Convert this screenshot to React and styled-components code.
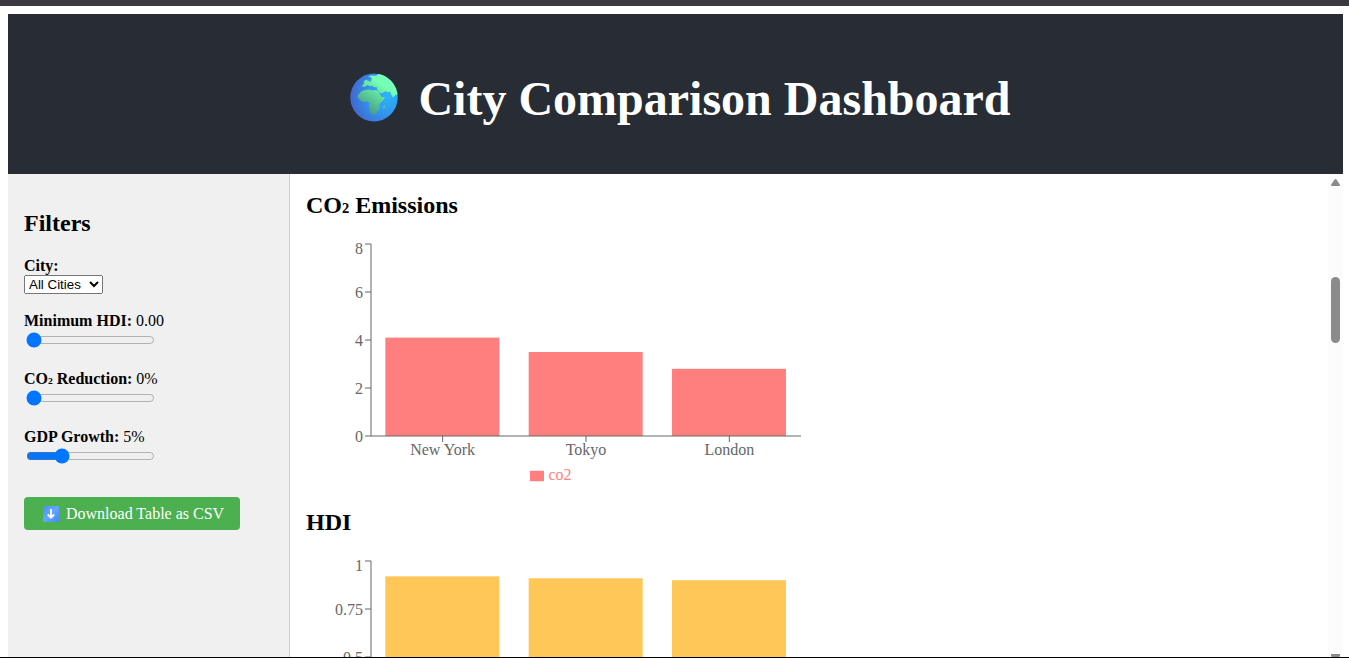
import React, { useState } from "react";
import styled, { createGlobalStyle } from "styled-components";

const GlobalStyle = createGlobalStyle`
  html { overflow: hidden; }
  body {
    margin: 0;
    background: #fff;
    color: #000;
    font: 16px/18px "Liberation Serif", "Times New Roman", serif;
    overflow: hidden;
  }
`;

const Page = styled.div`
  box-sizing: border-box;
  height: 658px;
  padding: 8px 6px 0 8px;
  border-top: 6px solid #3b393f;
  border-bottom: 1px solid #000;
  display: flex;
  flex-direction: column;
  overflow: hidden;
`;

const Header = styled.header`
  flex: none;
  box-sizing: border-box;
  height: 160px;
  padding-top: 6px;
  background: #282c34;
  color: #fff;
  display: flex;
  align-items: center;
  justify-content: center;
`;

const Title = styled.h1`
  margin: 0;
  padding-left: 10px;
  display: flex;
  align-items: center;
  font-size: 48px;
  line-height: 56px;
  white-space: nowrap;
`;

const TitleText = styled.span`
  margin: 4px 0 0 20px;
`;

const Body = styled.div`
  flex: 1;
  min-height: 0;
  display: flex;
`;

const Sidebar = styled.aside`
  flex: none;
  box-sizing: border-box;
  width: 282px;
  padding: 36px 16px 0;
  background: #f0f0f0;
  border-right: 1px solid #ccc;
`;

const Heading = styled.h2`
  margin: 0 0 20px;
  font-size: 24px;
  line-height: 27px;
  white-space: nowrap;
`;

const Subscript = styled.span`
  line-height: 0;
  vertical-align: 0.19em;
`;

const Field = styled.div`
  height: ${(p) => p.$height || 58}px;
`;

const Label = styled.label`
  display: block;
  height: 18px;
  white-space: nowrap;
`;

const Select = styled.select`
  display: block;
  width: 79px;
  height: 19px;
  font: 13.3333px "Liberation Sans", Arial, sans-serif;
`;

const Slider = styled.input`
  display: block;
  width: 129px;
  height: 16px;
  margin: 2px;
`;

const DownloadButton = styled.button`
  display: flex;
  align-items: center;
  width: 216px;
  height: 33px;
  margin-top: 11px;
  padding: 0 0 0 19px;
  gap: 7px;
  border: 0;
  border-radius: 4px;
  background: #4caf50;
  color: #fff;
  font: 16px/18px "Liberation Serif", "Times New Roman", serif;
  white-space: nowrap;
`;

const Content = styled.main`
  flex: 1;
  min-width: 0;
  padding: 18px 0 0 16px;
  overflow: hidden;
`;

const Chart = styled.svg`
  display: block;
  margin-bottom: 20px;
  font-size: 16px;
`;

const Scrollbar = styled.div`
  flex: none;
  width: 15px;
  background: #fcfcfc;
  display: flex;
  flex-direction: column;
  align-items: center;
  overflow: hidden;
`;

const ScrollArrow = styled.svg`
  flex: none;
  display: block;
  width: 9px;
  height: 7px;
  margin-top: 5px;
`;

const ScrollThumb = styled.div`
  flex: none;
  width: 9px;
  height: 66px;
  margin: 91px 0 306px;
  border-radius: 5px;
  background: #8b8b8b;
`;

function Globe() {
  return (
    <svg width="48" height="49" viewBox="0 0 48 49" aria-hidden="true">
      <defs>
        <radialGradient id="ocean" cx="0.8" cy="0.45" r="0.8">
          <stop offset="0" stopColor="#29b6fb" />
          <stop offset="0.5" stopColor="#3295ee" />
          <stop offset="1" stopColor="#4168cf" />
        </radialGradient>
        <linearGradient id="land" gradientUnits="userSpaceOnUse" x1="33" y1="12" x2="16" y2="38">
          <stop offset="0" stopColor="#77ffb5" />
          <stop offset="0.4" stopColor="#62d99c" />
          <stop offset="1" stopColor="#469b8b" />
        </linearGradient>
        <clipPath id="disc"><ellipse cx="24" cy="24.5" rx="23.7" ry="24" /></clipPath>
      </defs>
      <ellipse cx="24" cy="24.5" rx="23.7" ry="24" fill="url(#ocean)" />
      <g clipPath="url(#disc)" fill="url(#land)">
        <path d="M18 4l3-1.5 5 .3L30 0l9 3 10 10v8l-3.500 1L43 24.500l-1.500-2-1.500-4-2.500 1-2-1.500-2 1.500-3 1L28 18l-1-2 .5-1.500-4-.5-1.500-1.500-1.500 1-3-1.500-2 1.500-3 .5v-2l2-2-1-1.500 3-2 1.500 1.500 3-1 1-2-2-1z" />
        <path d="M11 18.500l4-1.500 5-.5 1.500 1 4-.5 2.500 1 2 3.500 1.500 2.500h3.500l-2 3.500-3.500 3.500v5l-2 2-1.500 2.500-3 1.500-2.500-1.500-1-3.500-.5-4 .5-3-2-1.500-4 .5-3-1.500-2.500-3v-2.500l2-2z" />
        <path d="M33.500 33l1-1 .6 2-1.200 2-1-1z" />
      </g>
      <path d="M19 4.500l2 .5.5 2-1 2-1.500-.5.5-2z" fill="#319de9" />
    </svg>
  );
}

function DownArrow() {
  return (
    <svg width="16" height="16" viewBox="0 0 16 16" aria-hidden="true">
      <defs>
        <linearGradient id="tile" x1="0" y1="0" x2="1" y2="1">
          <stop offset="0" stopColor="#4a91ee" />
          <stop offset="0.5" stopColor="#62a6ff" />
          <stop offset="1" stopColor="#4388f0" />
        </linearGradient>
      </defs>
      <rect width="16" height="16" rx="1" fill="url(#tile)" />
      <path d="M8 3v8M4.8 8.500L8 11.700l3.200-3.200" fill="none" stroke="#fff" strokeWidth="1.8" />
    </svg>
  );
}

const CITIES = ["New York", "Tokyo", "London"];

function BarChart({ values, max, ticks, color, name }) {
  const band = 430 / 3;
  const toY = (v) => 5 + 192 * (1 - v / max);
  return (
    <Chart width="500" height="250" viewBox="0 0 500 250">
      {values.map((v, i) => (
        <rect key={i} x={65 + band * (i + 0.1)} y={toY(v)} width="114" height={197 - toY(v)} fill={color} />
      ))}
      <g stroke="#666">
        <path d="M65 197H495M65 5V197" fill="none" />
        {ticks.map((t) => <path key={t} d={`M59 ${toY(t)}H65`} />)}
        {CITIES.map((c, i) => <path key={c} d={`M${65 + band * (i + 0.5)} 197v6`} />)}
      </g>
      <g fill="#666">
        {ticks.map((t) => (
          <text key={t} x="57" y={toY(t) + (t === max ? 10 : 6)} textAnchor="end">{t}</text>
        ))}
        {CITIES.map((c, i) => (
          <text key={c} x={65 + band * (i + 0.5)} y="216" textAnchor="middle">{c}</text>
        ))}
      </g>
      <rect x="224" y="231.75" width="14" height="10.5" fill={color} />
      <text x="242.4" y="241" fill={color}>{name}</text>
    </Chart>
  );
}

export default function App() {
  const [hdi, setHdi] = useState(0);
  const [co2, setCo2] = useState(0);
  const [gdp, setGdp] = useState(5);
  return (
    <>
      <GlobalStyle />
      <Page>
        <Header>
          <Title><Globe /><TitleText>City Comparison Dashboard</TitleText></Title>
        </Header>
        <Body>
          <Sidebar>
            <Heading>Filters</Heading>
            <Field $height={55}>
              <Label><b>City:</b></Label>
              <Select><option>All Cities</option></Select>
            </Field>
            <Field>
              <Label><b>Minimum HDI:</b> {hdi.toFixed(2)}</Label>
              <Slider type="range" min="0" max="1" step="0.01" value={hdi} onChange={(e) => setHdi(+e.target.value)} />
            </Field>
            <Field>
              <Label><b>CO<Subscript>₂</Subscript> Reduction:</b> {co2}%</Label>
              <Slider type="range" min="0" max="100" value={co2} onChange={(e) => setCo2(+e.target.value)} />
            </Field>
            <Field>
              <Label><b>GDP Growth:</b> {gdp}%</Label>
              <Slider type="range" min="0" max="20" value={gdp} onChange={(e) => setGdp(+e.target.value)} />
            </Field>
            <DownloadButton><DownArrow />Download Table as CSV</DownloadButton>
          </Sidebar>
          <Content>
            <Heading>CO<Subscript>₂</Subscript> Emissions</Heading>
            <BarChart values={[4.1, 3.5, 2.8]} max={8} ticks={[0, 2, 4, 6, 8]} color="#ff7f7f" name="co2" />
            <Heading>HDI</Heading>
            <BarChart values={[0.92, 0.91, 0.9]} max={1} ticks={[0, 0.25, 0.5, 0.75, 1]} color="#ffc658" name="hdi" />
          </Content>
          <Scrollbar>
            <ScrollArrow viewBox="0 0 9 7"><path d="M3.200 1Q4.500-.8 5.800 1L8.800 5.500Q9.200 7 8 7H1Q-.2 7 .2 5.500z" fill="#8b8b8b" /></ScrollArrow>
            <ScrollThumb />
            <ScrollArrow viewBox="0 0 9 7"><path d="M0 0h9v2L5.500 6.200q-1 1.400-2 0L0 2z" fill="#8b8b8b" /></ScrollArrow>
          </Scrollbar>
        </Body>
      </Page>
    </>
  );
}
